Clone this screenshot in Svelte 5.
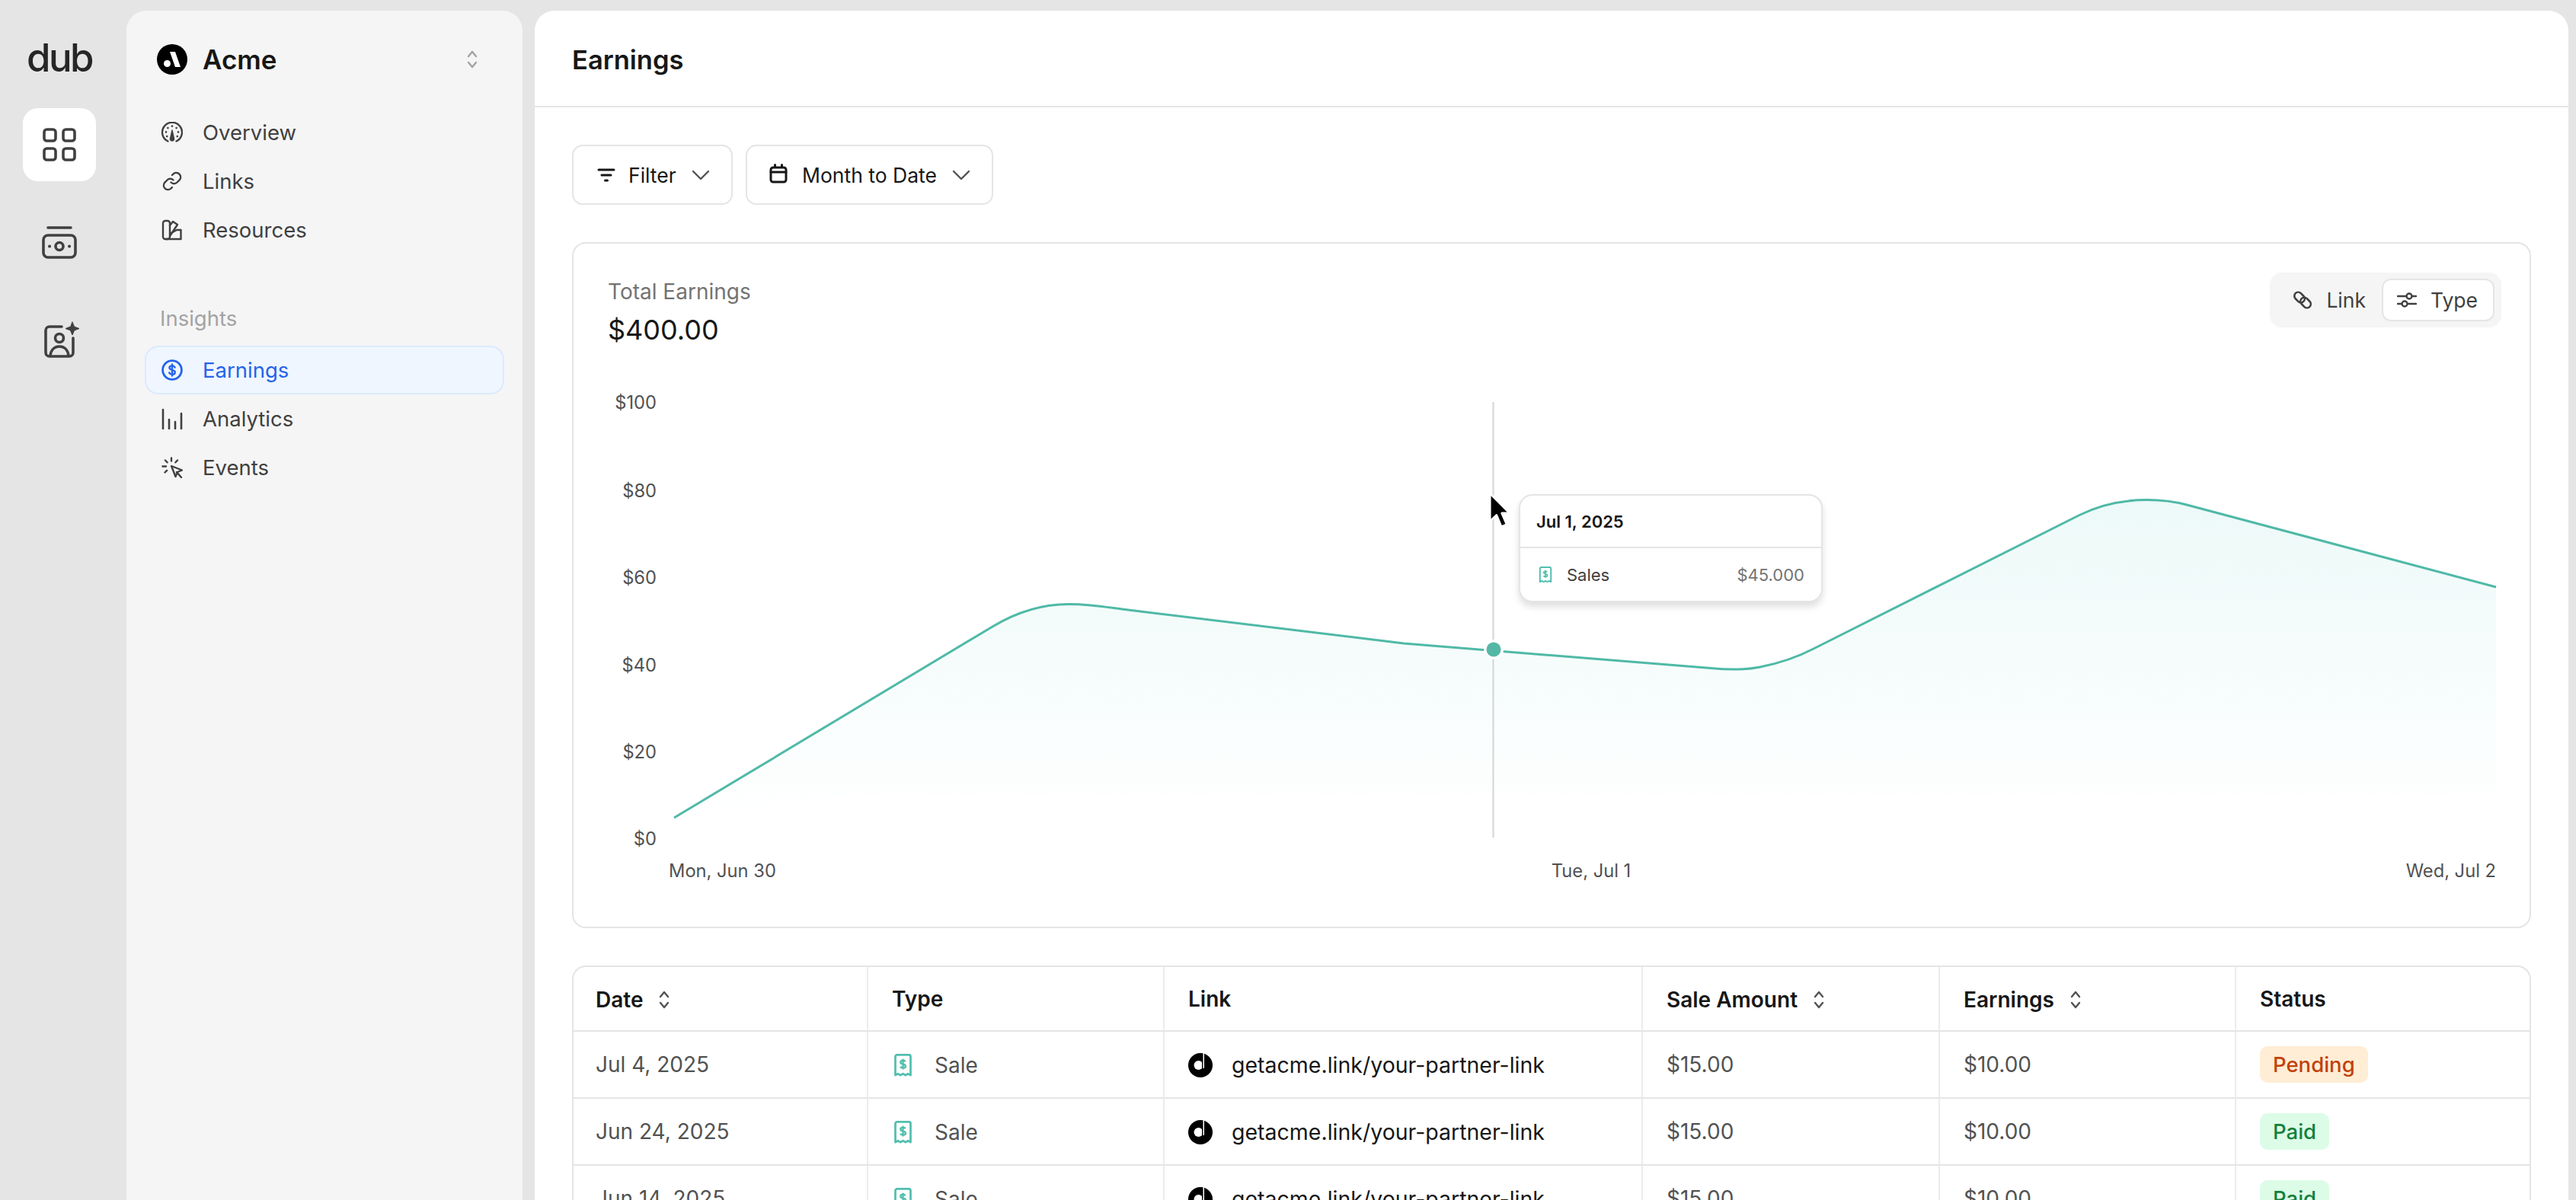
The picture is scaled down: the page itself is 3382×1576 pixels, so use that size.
<script>
  const nav = [
    { label: 'Overview', icon: 'gauge' },
    { label: 'Links', icon: 'link' },
    { label: 'Resources', icon: 'swatch' }
  ];
  const insights = [
    { label: 'Earnings', icon: 'dollar', active: true },
    { label: 'Analytics', icon: 'bars' },
    { label: 'Events', icon: 'click' }
  ];
  const yTicks = [
    { label: '$100', y: 537 },
    { label: '$80', y: 653 },
    { label: '$60', y: 767 },
    { label: '$40', y: 882 },
    { label: '$20', y: 996 },
    { label: '$0', y: 1110 }
  ];
  const rows = [
    { date: 'Jul 4, 2025', status: 'Pending' },
    { date: 'Jun 24, 2025', status: 'Paid' },
    { date: 'Jun 14, 2025', status: 'Paid' }
  ];
  const linePath =
    'M884 1074 L1302 823 C1340 800 1375 793 1405 793.5 C1430 793.5 1455 798 1480 801 L1842 845 L2245 877.5 C2265 879.5 2290 880 2310 876 C2335 871 2355 865 2380 852 L2729 676.5 C2757 662.5 2790 656.5 2818 656.5 C2836 656.5 2853 658.5 2870 663 L3276 771';
  const areaPath = linePath + ' L3276 1044 L1110 1044 Z';
</script>

{#snippet receipt(size)}
  <svg class="receipt" width={size} height={size * 1.2} viewBox="0 0 20 24" fill="none" stroke="#52bfae" stroke-width="2.2">
    <path d="M2 22.5V3a2 2 0 0 1 2-2h12a2 2 0 0 1 2 2v19.5l-2.7-1.5-2.6 1.5-2.7-1.5-2.7 1.5-2.6-1.5Z" stroke-linejoin="round" />
    <path d="M12.6 8.2c-.5-.9-1.4-1.2-2.6-1.2-1.4 0-2.6.7-2.6 1.9 0 2.8 5.4 1.2 5.4 4.1 0 1.2-1.2 1.9-2.8 1.9-1.2 0-2.2-.4-2.8-1.3M10 5.4v11" stroke-width="1.9" />
  </svg>
{/snippet}

{#snippet updown(cls)}
  <svg class={cls} viewBox="0 0 14 24" fill="none" stroke="currentColor" stroke-width="2.4" stroke-linecap="round" stroke-linejoin="round">
    <path d="M2 8l5-6 5 6M2 16l5 6 5-6" />
  </svg>
{/snippet}

{#snippet navIcon(name)}
  <svg class="nav-icon" viewBox="0 0 28 28" fill="none" stroke="currentColor" stroke-width="2.4" stroke-linecap="round" stroke-linejoin="round">
    {#if name === 'gauge'}
      <path d="M8.5 25.5A13 13 0 1 1 19.5 25.5" />
      <path d="M14 11l2.6 11.5a2.6 2.6 0 1 1-5.2 0Z" fill="currentColor" stroke-width="1.4" />
      <path d="M14 5.6v.1M8.4 8v.1M19.6 8v.1M6 13.4v.1M22 13.4v.1M7.2 19v.1M20.8 19v.1" stroke-width="2.6" />
    {:else if name === 'link'}
      <path d="M12.5 15.5a5.6 5.6 0 0 0 8 0l3.4-3.4a5.7 5.7 0 0 0-8-8L14 6" />
      <path d="M15.5 12.5a5.6 5.6 0 0 0-8 0l-3.4 3.4a5.7 5.7 0 0 0 8 8L14 22" />
    {:else if name === 'swatch'}
      <rect x="2" y="2" width="9" height="24" rx="3" />
      <path d="M11 8l4-5 6 4-10 15" />
      <path d="M11 19l9-5h5.5V26H5.5" />
    {:else if name === 'dollar'}
      <circle cx="14" cy="14" r="12.4" stroke-width="2.8" />
      <path d="M17.6 10.6c-.6-1.5-1.9-2.2-3.6-2.2-2 0-3.6 1-3.6 2.7 0 3.9 7.4 1.7 7.4 5.8 0 1.8-1.7 2.8-3.8 2.8-1.8 0-3.2-.8-3.8-2.3M14 6.4v15.2" />
    {:else if name === 'bars'}
      <path d="M2 2v25M10 15v12M18 18v9M26 7v20" stroke-width="2.6" />
    {:else if name === 'click'}
      <path d="M13 12l14 5.5-6 2.5-2.5 6Z" fill="none" />
      <path d="M20 20l6 7M13 1.5v4M5 4.5l2.6 2.8M1.500 12.500h4.500M4.500 20.500l2.600-2.600M21 4.500l-2.600 2.800" />
    {/if}
  </svg>
{/snippet}

<div class="app">
  <nav class="rail">
    <div class="logo">dub</div>
    <a class="rail-btn active" href="#programs" aria-label="Programs">
      <svg width="44" height="44" viewBox="0 0 44 44" fill="none" stroke="#404040" stroke-width="3.600">
        <rect x="2" y="2" width="15" height="15" rx="3.500" />
        <rect x="27" y="2" width="15" height="15" rx="3.500" />
        <rect x="2" y="27" width="15" height="15" rx="3.500" />
        <rect x="27" y="27" width="15" height="15" rx="3.500" />
      </svg>
    </a>
    <a class="rail-btn" href="#payouts" aria-label="Payouts">
      <svg width="46" height="44" viewBox="0 0 46 44" fill="none" stroke="#404040" stroke-width="3.600" stroke-linecap="round">
        <path d="M8 3h30" />
        <rect x="2" y="13" width="42" height="29" rx="6" />
        <circle cx="23" cy="27.500" r="5" />
        <path d="M10 27.500h.1M36 27.500h.1" stroke-width="4" />
      </svg>
    </a>
    <a class="rail-btn partner" href="#marketplace" aria-label="Marketplace">
      <svg width="48" height="48" viewBox="0 0 48 48" fill="none" stroke="#404040" stroke-width="3.600" stroke-linecap="round" stroke-linejoin="round">
        <path d="M24 7H8a5 5 0 0 0-5 5v29a5 5 0 0 0 5 5h26a5 5 0 0 0 5-5V22" />
        <circle cx="21" cy="22" r="5.500" />
        <path d="M9 45c1-8 6-12 12-12s11 4 12 12" />
        <path d="M38 1l2.500 6 6.500 2.500-6.500 2.500-2.500 6-2.500-6-6.500-2.500 6.500-2.500Z" fill="#404040" stroke-width="1" />
      </svg>
    </a>
  </nav>

  <aside class="sidebar">
    <div class="org">
      <svg class="org-logo" viewBox="0 0 40 40" width="40" height="40">
        <circle cx="20" cy="20" r="20" fill="#000" />
        <path d="M17 10h7l7 20h-7Z" fill="#fff" />
        <circle cx="13.500" cy="25.500" r="4.500" fill="#fff" />
      </svg>
      <span class="org-name">Acme</span>
      {@render updown('org-chev')}
    </div>

    <ul class="nav">
      {#each nav as item}
        <li class="nav-item">{@render navIcon(item.icon)}<span>{item.label}</span></li>
      {/each}
    </ul>

    <div class="nav-title">Insights</div>
    <ul class="nav">
      {#each insights as item}
        <li class="nav-item" class:current={item.active}>{@render navIcon(item.icon)}<span>{item.label}</span></li>
      {/each}
    </ul>
  </aside>

  <main class="main">
    <header class="page-head"><h1>Earnings</h1></header>

    <div class="content">
      <div class="filters">
        <button class="filter-btn filter-a">
          <svg class="btn-icon" viewBox="0 0 24 24" fill="none" stroke="#171717" stroke-width="3" stroke-linecap="round">
            <path d="M2 5h20M6 12h12M10.500 19h3" />
          </svg>
          <span>Filter</span>
          <svg class="chev" viewBox="0 0 24 14" fill="none" stroke="#525252" stroke-width="2.400" stroke-linecap="round" stroke-linejoin="round"><path d="M2 2l10 10L22 2" /></svg>
        </button>
        <button class="filter-btn filter-b">
          <svg class="btn-icon cal" viewBox="0 0 24 26" fill="none" stroke="#171717" stroke-width="3" stroke-linecap="round">
            <rect x="2" y="5" width="20" height="19" rx="3" />
            <path d="M2 11h20M7.500 1.500v3M16.500 1.500v3" />
          </svg>
          <span>Month to Date</span>
          <svg class="chev" viewBox="0 0 24 14" fill="none" stroke="#525252" stroke-width="2.400" stroke-linecap="round" stroke-linejoin="round"><path d="M2 2l10 10L22 2" /></svg>
        </button>
      </div>

      <section class="card">
        <div class="card-head">
          <div>
            <div class="total-label">Total Earnings</div>
            <div class="total-value">$400.00</div>
          </div>
          <div class="toggle">
            <div class="toggle-opt">
              <svg viewBox="0 0 26 26" width="26" height="26" fill="none" stroke="#404040" stroke-width="2.600">
                <rect x="1.500" y="4.500" width="15" height="10" rx="5" transform="rotate(45 9 9.500)" />
                <rect x="9.500" y="11.500" width="15" height="10" rx="5" transform="rotate(45 17 16.500)" />
              </svg>
              <span>Link</span>
            </div>
            <div class="toggle-opt on">
              <svg viewBox="0 0 26 20" width="26" height="20" fill="none" stroke="#404040" stroke-width="2.400" stroke-linecap="round">
                <path d="M1 5h11M20 5h5M1 15h5M14 15h11" />
                <circle cx="16" cy="5" r="3.500" />
                <circle cx="10" cy="15" r="3.500" />
              </svg>
              <span>Type</span>
            </div>
          </div>
        </div>

        <div class="chart">
          <svg class="chart-svg" viewBox="780 500 2530 680" width="2530" height="680">
            <defs>
              <linearGradient id="fade" gradientUnits="userSpaceOnUse" x1="0" y1="656" x2="0" y2="1085">
                <stop offset="0" stop-color="#1ab8ac" stop-opacity="0.08" />
                <stop offset="1" stop-color="#1ab8ac" stop-opacity="0" />
              </linearGradient>
            </defs>
            {#each yTicks as t}
              <text class="axis" x="861" y={t.y} text-anchor="end">{t.label}</text>
            {/each}
            <text class="axis" x="877" y="1152">Mon, Jun 30</text>
            <text class="axis" x="2088" y="1152" text-anchor="middle">Tue, Jul 1</text>
            <text class="axis" x="3276" y="1152" text-anchor="end">Wed, Jul 2</text>
            <path d={areaPath} fill="url(#fade)" />
            <path d={linePath} fill="none" stroke="#4fb9a7" stroke-width="3" />
            <path d="M1959.500 528V1100" stroke="#d4d4d4" stroke-width="2" />
            <circle cx="1960" cy="853" r="13" fill="#fff" />
            <circle cx="1960" cy="853" r="9.500" fill="#55b8a6" />
          </svg>

          <div class="tooltip">
            <div class="tip-date">Jul 1, 2025</div>
            <div class="tip-row">
              {@render receipt(18)}
              <span class="tip-name">Sales</span>
              <span class="tip-val">$45.000</span>
            </div>
          </div>

          <svg class="cursor" viewBox="0 0 28 46" width="30" height="49">
            <path d="M2 2v34l8-7.500 6 14.500 6.500-2.800-6-14H26Z" fill="#000" stroke="#fff" stroke-width="2.500" stroke-linejoin="round" />
          </svg>
        </div>
      </section>

      <div class="table-wrap">
        <table>
          <colgroup>
            <col style="width:387px" /><col style="width:389px" /><col style="width:628px" />
            <col style="width:390px" /><col style="width:389px" /><col />
          </colgroup>
          <thead>
            <tr>
              <th><span class="th-in">Date {@render updown('sort')}</span></th>
              <th>Type</th>
              <th>Link</th>
              <th><span class="th-in">Sale Amount {@render updown('sort')}</span></th>
              <th><span class="th-in">Earnings {@render updown('sort')}</span></th>
              <th>Status</th>
            </tr>
          </thead>
          <tbody>
            {#each rows as row}
              <tr>
                <td>{row.date}</td>
                <td><span class="cell-in type-cell">{@render receipt(25)}Sale</span></td>
                <td>
                  <span class="cell-in link-cell">
                    <svg width="32" height="32" viewBox="0 0 32 32">
                      <circle cx="16" cy="16" r="16" fill="#000" />
                      <circle cx="13.500" cy="16" r="6" fill="#fff" />
                      <rect x="18" y="6" width="1.500" height="16" fill="#000" />
                      <rect x="19.500" y="0" width="1.500" height="20" fill="#fff" />
                    </svg>
                    getacme.link/your-partner-link
                  </span>
                </td>
                <td>$15.00</td>
                <td>$10.00</td>
                <td><span class="badge" class:pending={row.status === 'Pending'}>{row.status}</span></td>
              </tr>
            {/each}
          </tbody>
        </table>
      </div>
    </div>
  </main>
</div>

<style>
  :global(body) {
    margin: 0;
    background: #e5e5e5;
    overflow: hidden;
  }

  .app {
    display: flex;
    height: 1576px;
    overflow: hidden;
    font-family: Inter, 'Noto Sans', sans-serif;
    color: #171717;
  }

  .rail {
    width: 166px;
    flex: none;
    box-sizing: border-box;
    padding-right: 10px;
    display: flex;
    flex-direction: column;
    align-items: center;
  }

  .logo {
    height: 48px;
    margin-top: 52px;
    margin-bottom: 42px;
    font-size: 51px;
    line-height: 48px;
    font-weight: 500;
    letter-spacing: -2.5px;
    color: #262626;
  }

  .rail-btn {
    width: 96px;
    height: 96px;
    margin-bottom: 32px;
    border-radius: 20px;
    display: flex;
    align-items: center;
    justify-content: center;
  }

  .rail-btn.active {
    background: #fff;
  }

  .rail-btn.partner {
    padding-left: 6px;
    box-sizing: border-box;
  }

  .sidebar {
    width: 520px;
    flex: none;
    margin-top: 14px;
    padding: 0 24px;
    box-sizing: border-box;
    background: #f5f5f5;
    border-radius: 26px 26px 0 0;
  }

  .org {
    display: flex;
    align-items: center;
    height: 40px;
    margin: 44px 0 0 16px;
  }

  .org-logo {
    flex: none;
  }

  .org-name {
    margin-left: 20px;
    font-size: 35px;
    font-weight: 600;
    color: #171717;
  }

  :global(.org-chev) {
    width: 14px;
    height: 24px;
    margin-left: auto;
    margin-right: 35px;
    color: #a3a3a3;
  }

  .nav {
    list-style: none;
    margin: 0;
    padding: 0;
  }

  .sidebar > .nav:first-of-type {
    margin-top: 44px;
  }

  .nav-item {
    display: flex;
    align-items: center;
    height: 64px;
    box-sizing: border-box;
    padding-left: 20px;
    gap: 26px;
    font-size: 27.500px;
    color: #404040;
    border: 2px solid transparent;
    border-radius: 18px;
  }

  .nav-item.current {
    background: #eff6ff;
    border-color: #dbeafe;
    color: #2563eb;
  }

  :global(.nav-icon) {
    width: 28px;
    height: 28px;
    flex: none;
  }

  .nav-title {
    margin: 68px 0 0 20px;
    height: 32px;
    line-height: 32px;
    margin-bottom: 20px;
    font-size: 27.500px;
    color: #a3a3a3;
  }

  .main {
    flex: none;
    width: 2670px;
    margin: 14px 0 0 16px;
    background: #fff;
    border-radius: 26px 26px 0 0;
    overflow: hidden;
  }

  .page-head {
    height: 127px;
    box-sizing: border-box;
    border-bottom: 2px solid #e5e5e5;
    padding-left: 49px;
    display: flex;
    align-items: center;
  }

  h1 {
    margin: 4px 0 0;
    font-size: 34.500px;
    font-weight: 600;
    color: #171717;
  }

  .content {
    padding: 49px 49px 0;
  }

  .filters {
    display: flex;
    gap: 17px;
  }

  .filter-btn {
    height: 79px;
    display: flex;
    align-items: center;
    box-sizing: border-box;
    background: #fff;
    border: 2px solid #e5e5e5;
    border-radius: 14px;
    font-family: inherit;
    font-size: 26.500px;
    font-weight: 400;
    color: #171717;
    padding: 0;
  }

  .filter-a {
    width: 211px;
    padding-left: 31px;
  }

  .filter-b {
    width: 325px;
    padding-left: 29px;
  }

  .btn-icon {
    width: 24px;
    height: 24px;
    flex: none;
    margin-right: 17px;
  }

  .cal {
    height: 28px;
    margin-right: 19px;
    margin-top: -4px;
  }

  .chev {
    width: 24px;
    height: 14px;
    margin-left: 20px;
    flex: none;
  }

  .card {
    margin-top: 49px;
    height: 901px;
    box-sizing: border-box;
    border: 2px solid #e5e5e5;
    border-radius: 18px;
  }

  .card-head {
    display: flex;
    justify-content: space-between;
    padding: 38px 37px 0 45px;
    height: 138px;
    box-sizing: border-box;
    align-items: flex-start;
  }

  .total-label {
    margin-top: 5px;
    font-size: 28px;
    line-height: 40px;
    color: #737373;
  }

  .total-value {
    margin-top: 5px;
    font-size: 36px;
    line-height: 50px;
    font-weight: 400;
    color: #171717;
  }

  .toggle {
    display: flex;
    box-sizing: border-box;
    width: 304px;
    height: 72px;
    padding: 8px 9px 8px 0;
    background: #f5f5f5;
    border-radius: 16px;
    justify-content: flex-end;
  }

  .toggle-opt {
    display: flex;
    align-items: center;
    flex: none;
    gap: 18px;
    height: 56px;
    box-sizing: border-box;
    padding: 0 19px 0 0;
    border: 2px solid transparent;
    font-size: 26.500px;
    color: #404040;
    border-radius: 12px;
  }

  .toggle-opt.on {
    width: 148px;
    padding: 0 0 0 18px;
    background: #fff;
    border-color: #e5e5e5;
  }

  .chart {
    position: relative;
    width: 2530px;
    height: 680px;
    margin: 42px 0 0 28px;
  }

  .chart-svg {
    display: block;
  }

  .axis {
    font-size: 23.700px;
    fill: #525252;
  }

  .tooltip {
    position: absolute;
    left: 1213px;
    top: 149px;
    width: 399px;
    height: 142px;
    box-sizing: border-box;
    background: #fff;
    border: 2px solid #e5e5e5;
    border-radius: 18px;
    box-shadow: 0 6px 10px rgba(0, 0, 0, 0.13);
  }

  .tip-date {
    height: 69px;
    box-sizing: border-box;
    border-bottom: 2px solid #e5e5e5;
    display: flex;
    align-items: center;
    padding-left: 21px;
    font-size: 22px;
    font-weight: 600;
    color: #171717;
  }

  .tip-row {
    display: flex;
    align-items: center;
    height: 69px;
    padding: 0 22px 0 24px;
    font-size: 22px;
  }

  :global(.tip-row .receipt) {
    flex: none;
  }

  .tip-name {
    margin-left: 19px;
    color: #404040;
  }

  .tip-val {
    margin-left: auto;
    color: #737373;
  }

  .cursor {
    position: absolute;
    left: 1173px;
    top: 146px;
  }

  .table-wrap {
    margin-top: 49px;
    border: 2px solid #e5e5e5;
    border-bottom: 0;
    border-radius: 18px 18px 0 0;
    overflow: hidden;
  }

  table {
    width: 100%;
    table-layout: fixed;
    border-collapse: separate;
    border-spacing: 0;
    font-size: 28px;
  }

  th,
  td {
    padding: 0 0 0 31px;
    text-align: left;
    border-right: 2px solid #ececec;
    border-bottom: 2px solid #e5e5e5;
    white-space: nowrap;
  }

  th:first-child,
  td:first-child {
    padding-left: 29px;
  }

  th:last-child,
  td:last-child {
    border-right: 0;
  }

  th {
    height: 83px;
    font-weight: 600;
    font-size: 28px;
    color: #171717;
  }

  td {
    height: 86px;
    color: #525252;
  }

  .th-in {
    display: inline-flex;
    align-items: center;
    gap: 20px;
    vertical-align: middle;
  }

  :global(.sort) {
    width: 16px;
    height: 24px;
    color: #525252;
  }

  .cell-in {
    display: inline-flex;
    align-items: center;
    vertical-align: middle;
  }

  .type-cell {
    gap: 29px;
  }

  :global(.type-cell .receipt) {
    margin-left: 2px;
  }

  .link-cell {
    gap: 25px;
    color: #171717;
    font-size: 28.500px;
  }

  .badge {
    display: inline-block;
    vertical-align: middle;
    height: 48px;
    line-height: 48px;
    padding: 0 17px;
    border-radius: 10px;
    background: #dcfce7;
    color: #15803d;
    font-weight: 500;
    font-size: 27.500px;
  }

  .badge.pending {
    background: #ffedd5;
    color: #c2410c;
  }
</style>
